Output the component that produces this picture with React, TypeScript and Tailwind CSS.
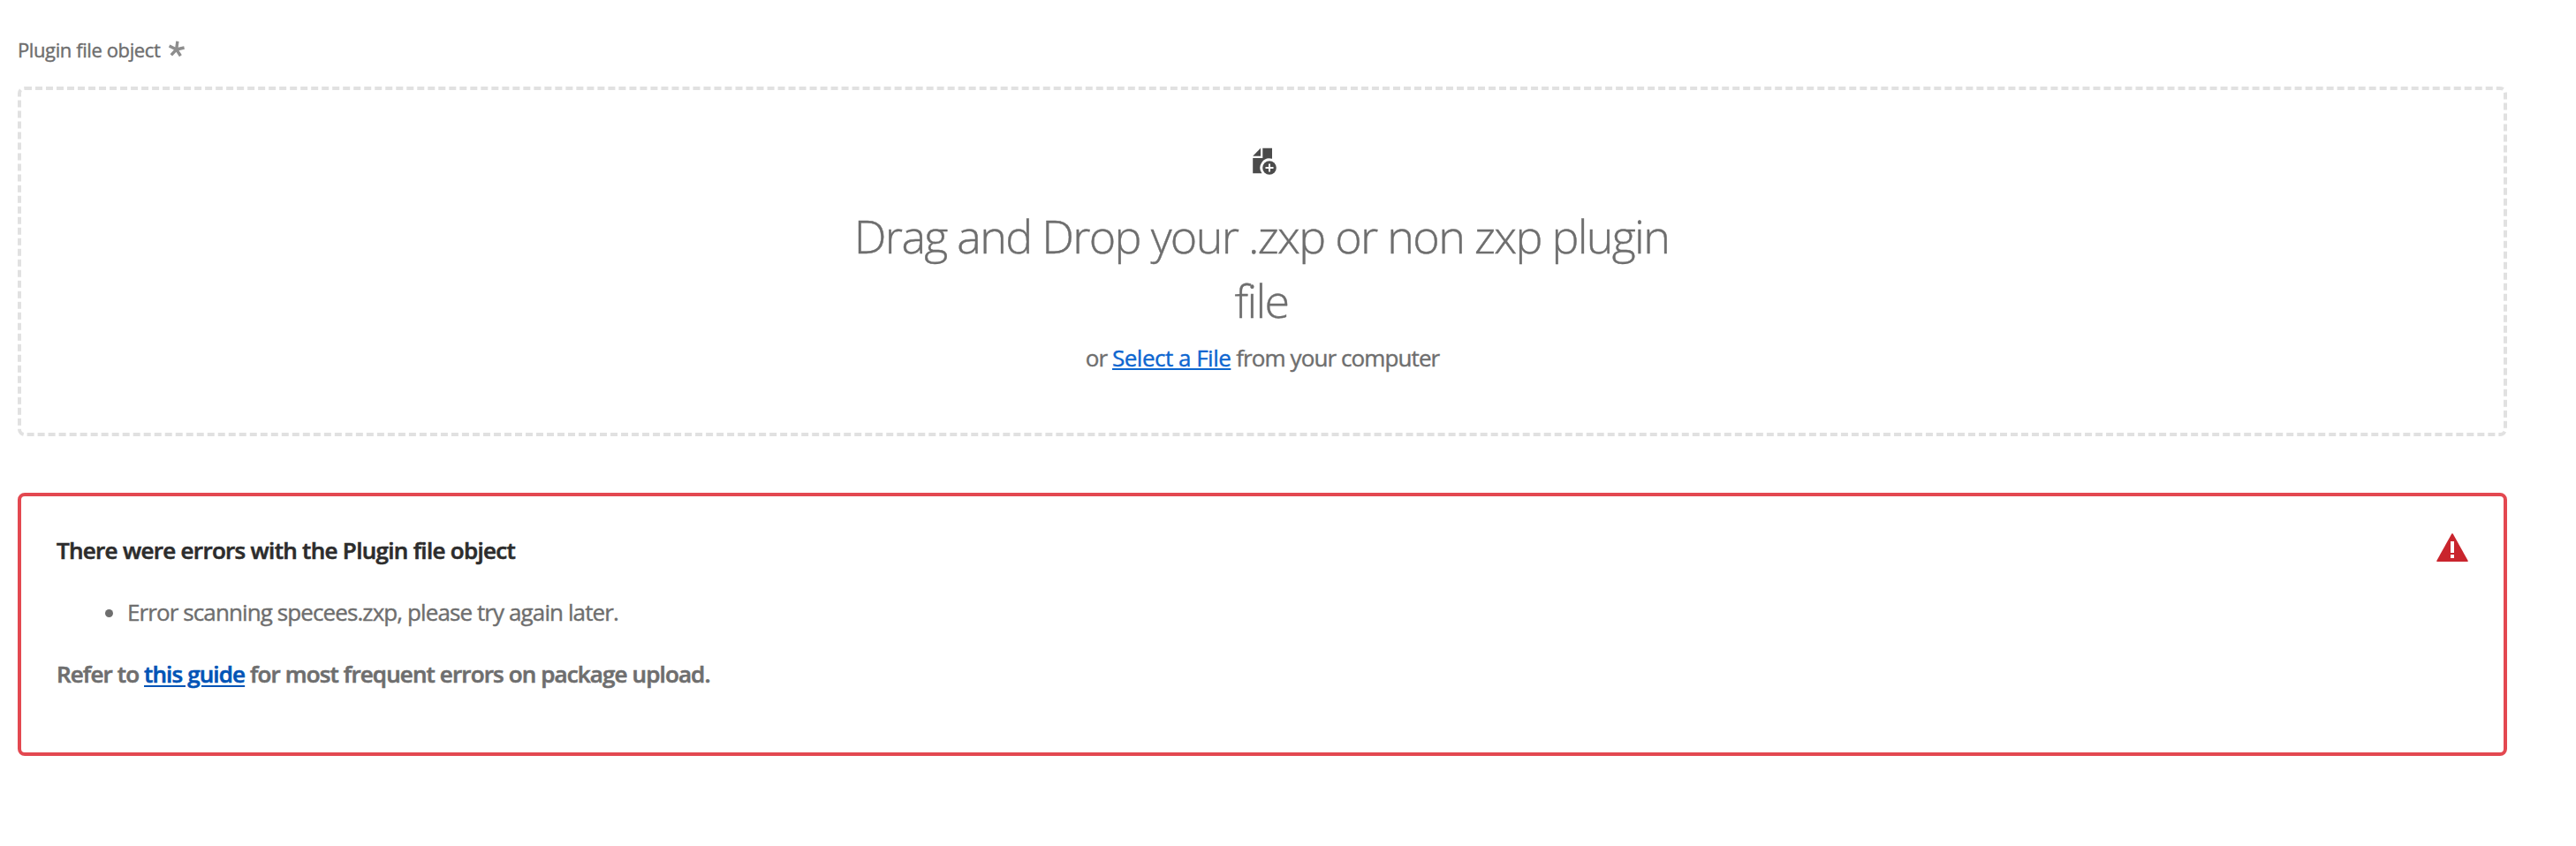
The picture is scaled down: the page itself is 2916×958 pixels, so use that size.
interface UploadError {
    id: number;
    message: string;
}

// Mock data
const errors: UploadError[] = [
    { id: 1, message: "Error scanning specees.zxp, please try again later." },
];

const RequiredIcon = () => (
    <svg className="h-5 w-5" viewBox="0 0 20 20" stroke="#8e8e8e" strokeWidth="3.4">
        <path d="M9.7 11L10.9 1.8M9.7 11L18.6 9M9.7 11L14.4 18.2M9.7 11L3.8 17.4M9.7 11L1.6 7" />
    </svg>
);

const FileAddIcon = () => (
    <svg className="h-9 w-9" viewBox="0 0 36 36" fill="#4b4b4b">
        <path d="M7.2 11.7L16 2.7V11.7Z" />
        <path d="M18.3 2.7H29V14.8A10.6 10.6 0 0 0 17.5 31.3H7.2V14H18.3Z" />
        <circle cx="26" cy="25" r="7.8" />
        <path d="M26 20.5V29.5M21.5 25H30.5" stroke="#fff" strokeWidth="2" />
    </svg>
);

const AlertIcon = () => (
    <svg className="-mt-px h-8 w-9" viewBox="0 0 36 32">
        <path d="M17.1 0.8Q18 -0.6 18.9 0.8L35.6 30.8Q36 32 35 32H1Q0 32 0.4 30.8Z" fill="#c9252d" />
        <path d="M16 9H20V22H16ZM16 24H20V28H16Z" fill="#fff" />
    </svg>
);

export default function App() {
    return (
        <div className="min-h-screen bg-white pt-[41px] pl-5 font-['Open_Sans',sans-serif] text-[#6e6e6e] [-webkit-text-stroke:0.4px]">
            <div className="flex h-[57px] items-start gap-[9px]">
                <span className="text-[22px] leading-[30px] tracking-[-0.4px]">Plugin file object</span>
                <span className="pt-1">
                    <RequiredIcon />
                </span>
            </div>

            {/* Drop zone */}
            <div className="flex h-[396px] w-[2818px] flex-col items-center rounded-lg border-4 border-dashed border-[#e1e1e1] pt-[63px]">
                <FileAddIcon />
                <h2 className="mt-[29px] mr-0.5 w-[940px] text-center text-[52px] leading-[73px] font-light tracking-[-1.7px]">
                    Drag and Drop your .zxp or non zxp plugin file
                </h2>
                <p className="mt-[11px] text-[26px] leading-9 tracking-[-0.9px]">
                    or{" "}
                    <a
                        href="#"
                        className="tracking-[-0.5px] text-[#0d66d0] underline decoration-2 underline-offset-2"
                    >
                        Select a File
                    </a>{" "}
                    from your computer
                </p>
            </div>

            {/* Error summary */}
            <div className="mt-16 flex h-[298px] w-[2818px] items-start justify-between rounded-lg border-4 border-[#e34850] px-10 pt-[43px] text-[26px] leading-9">
                <div className="flex flex-col gap-[34px]">
                    <h3 className="font-semibold tracking-[-0.7px] text-[#2c2c2c] [-webkit-text-stroke:0.6px]">
                        There were errors with the Plugin file object
                    </h3>
                    <ul className="pl-[55px]">
                        {errors.map((error) => (
                            <li key={error.id} className="flex items-center gap-4 tracking-[-0.9px]">
                                <span className="mt-0.5 size-[9px] rounded-full bg-[#6e6e6e]" />
                                <span>{error.message}</span>
                            </li>
                        ))}
                    </ul>
                    <p className="font-semibold tracking-[-0.87px] [-webkit-text-stroke:0.6px]">
                        Refer to{" "}
                        <a href="#" className="text-[#0054b6] underline decoration-2 underline-offset-[3px]">
                            this guide
                        </a>{" "}
                        for most frequent errors on package upload.
                    </p>
                </div>
                <AlertIcon />
            </div>
        </div>
    );
}
